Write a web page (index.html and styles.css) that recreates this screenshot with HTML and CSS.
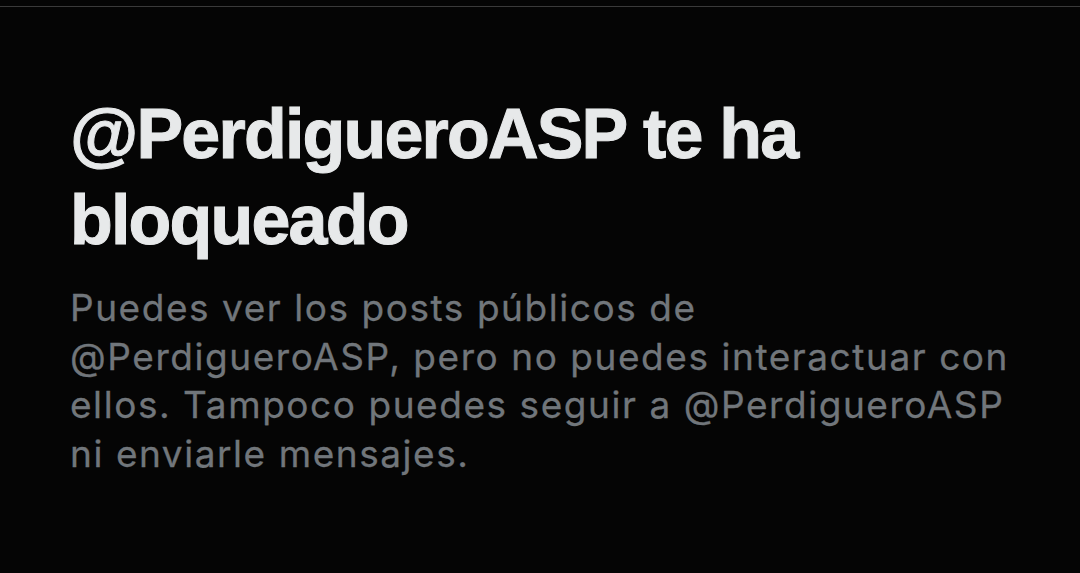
FILE: index.html
```html
<!DOCTYPE html>
<html lang="es">
<head>
<meta charset="utf-8">
<link rel="stylesheet" href="styles.css">
</head>
<body>
<div class="divider"></div>
<main class="empty">
  <h1 class="title">@PerdigueroASP te ha bloqueado</h1>
  <p class="desc">Puedes ver los posts públicos de @PerdigueroASP, pero no puedes interactuar con ellos. Tampoco puedes seguir a @PerdigueroASP ni enviarle mensajes.</p>
</main>
</body>
</html>
```
FILE: styles.css
```css
html, body {
  margin: 0;
  padding: 0;
  background: #050505;
  width: 1080px;
  height: 573px;
  overflow: hidden;
}
.divider {
  margin-top: 6px;
  height: 1px;
  background: #3a3a3a;
}
.empty {
  padding: 84px 0 0 70px;
  width: 960px;
}
.title {
  margin: 0 0 21px 0;
  font-family: "Liberation Sans", Arial, sans-serif;
  font-weight: 700;
  font-size: 70px;
  line-height: 86px;
  color: #e7e9ea;
  letter-spacing: -1.8px;
  -webkit-text-stroke: 1px #e7e9ea;
}
.desc {
  margin: 0;
  font-family: "Inter", "Liberation Sans", sans-serif;
  font-size: 37px;
  line-height: 48.5px;
  color: #71767b;
  letter-spacing: 1.55px;
  -webkit-text-stroke: 0.3px #71767b;
}
```
